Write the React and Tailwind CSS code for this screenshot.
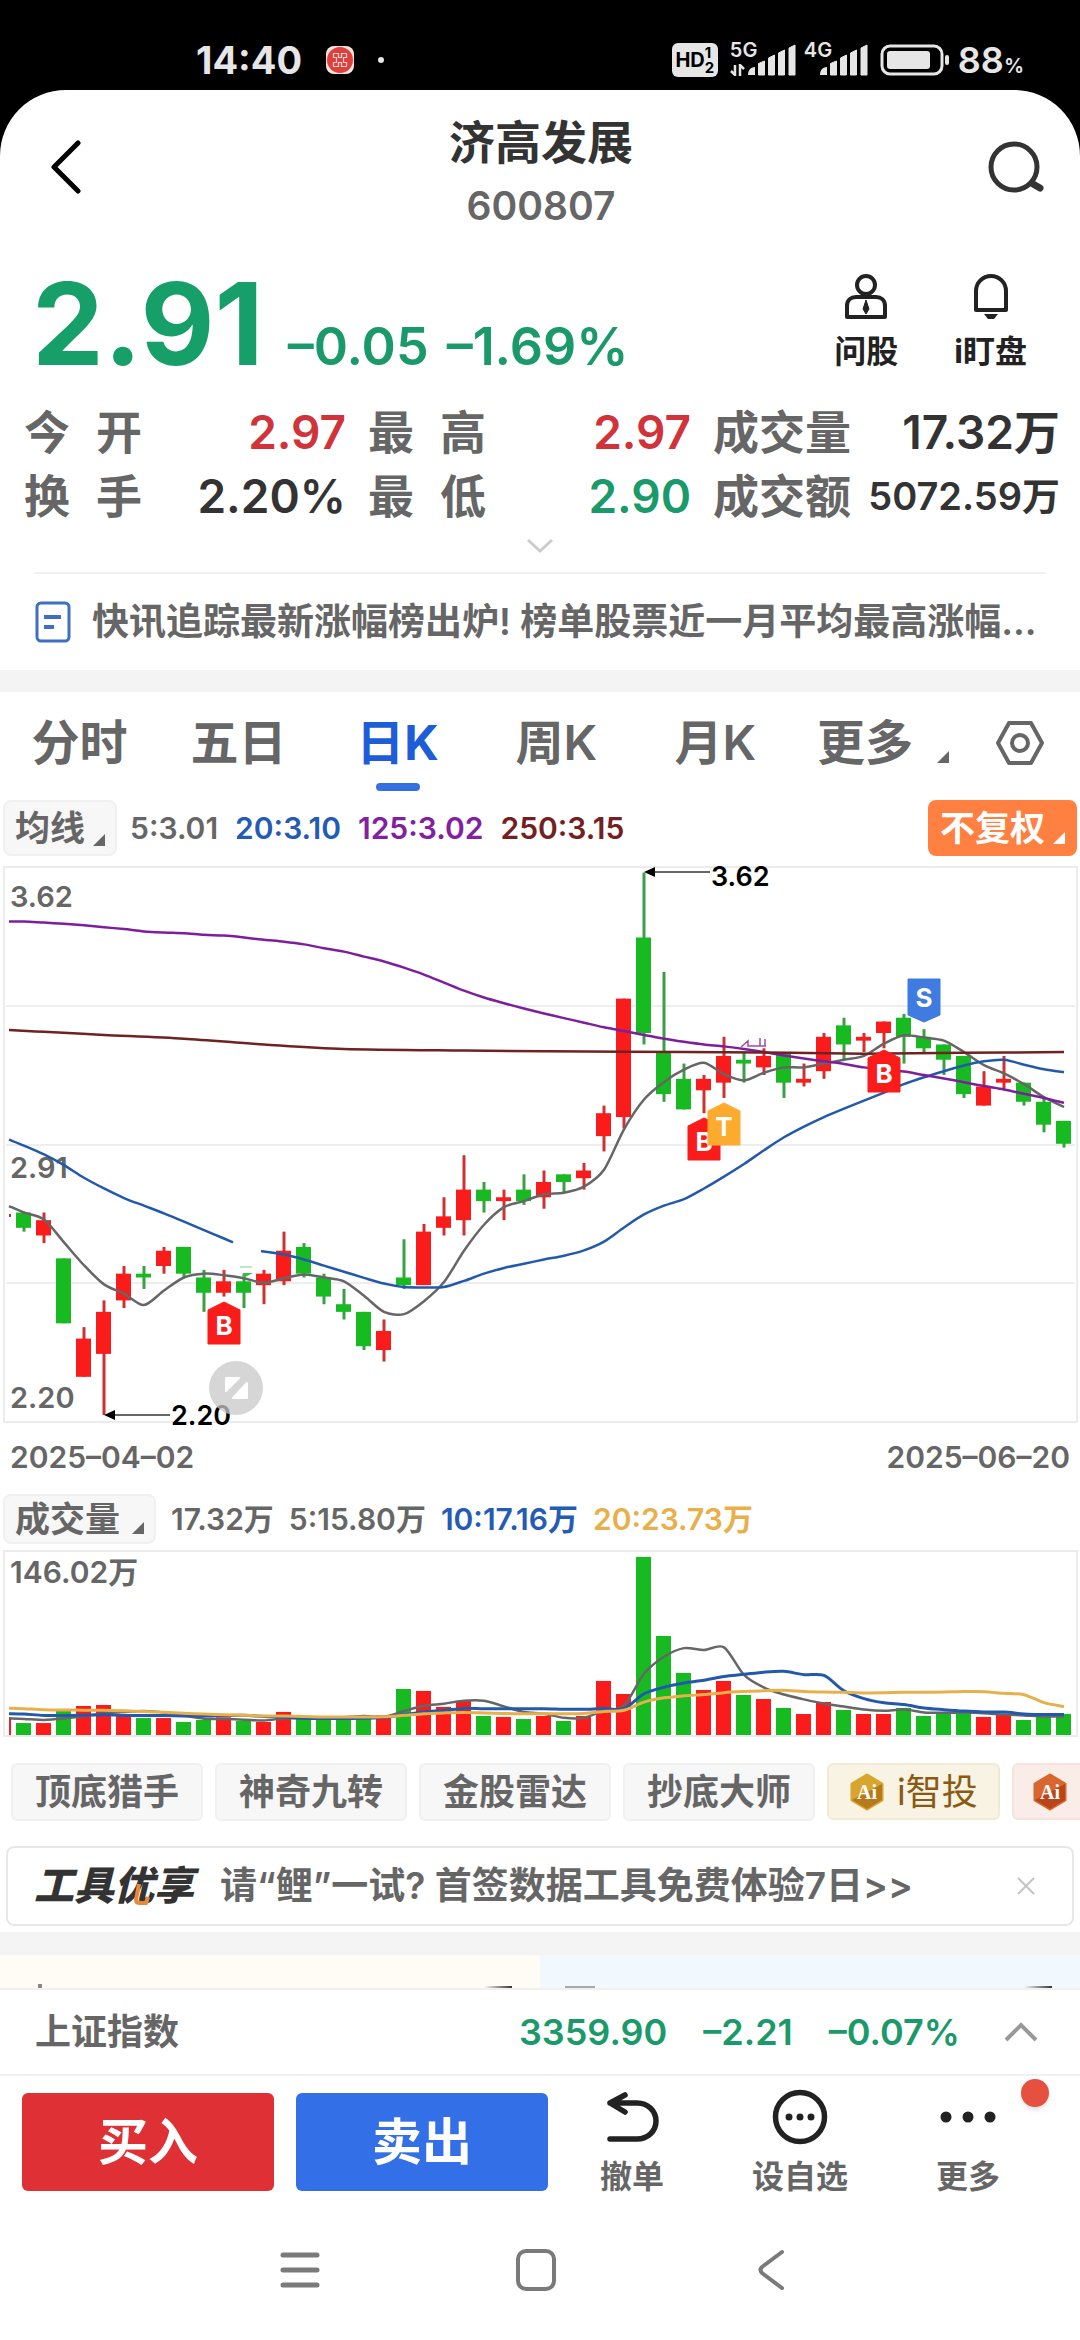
import React from 'react';

const candles = [
  // open, high, low, close (in cents), volume (in 万)
  [273, 273, 268, 269, 9.8],
  [267, 273, 265, 271, 9.8],
  [261, 261, 244, 244, 20],
  [230, 243, 230, 240, 23.8],
  [236, 250, 220, 247, 24.6],
  [250, 259, 248, 257, 16.1],
  [257, 259, 253, 256, 13.9],
  [259, 264, 257, 263, 13.9],
  [264, 264, 256, 257, 10.7],
  [256, 258, 247, 252, 12.3],
  [252, 258, 251, 255, 14.5],
  [255, 257, 248, 252, 11.5],
  [254, 258, 249, 257, 10.7],
  [255, 268, 254, 263, 18.9],
  [264, 265, 256, 257, 13.9],
  [256, 257, 249, 251, 14.5],
  [249, 253, 245, 247, 14.5],
  [247, 247, 237, 238, 15.6],
  [237, 245, 234, 242, 16.1],
  [256, 266, 253, 254, 37.7],
  [254, 270, 254, 268, 36.1],
  [269, 277, 267, 272, 23],
  [271, 288, 267, 279, 27.9],
  [279, 281, 273, 276, 15.6],
  [276, 279, 271, 277, 14.8],
  [279, 283, 275, 276, 13.1],
  [277, 284, 274, 281, 15.6],
  [283, 283, 278, 281, 11.5],
  [282, 286, 279, 284, 15.6],
  [293, 301, 289, 299, 44.3],
  [298, 329, 295, 329, 33.6],
  [345, 362, 317, 320, 146],
  [315, 336, 302, 304, 81.2],
  [308, 312, 300, 300, 50.9],
  [305, 309, 299, 308, 36.9],
  [307, 319, 303, 314, 44.3],
  [313, 315, 307, 312, 32.8],
  [311, 316, 309, 314, 29.5],
  [315, 315, 303, 307, 22.2],
  [307, 312, 306, 308, 17.2],
  [310, 320, 308, 319, 27.1],
  [322, 324, 313, 317, 20.5],
  [318, 320, 315, 319, 17.2],
  [320, 323, 316, 323, 17.2],
  [324, 325, 312, 319, 22.2],
  [319, 321, 315, 316, 15.6],
  [317, 317, 309, 313, 18.9],
  [314, 314, 303, 304, 18],
  [301, 310, 301, 306, 14.8],
  [307, 314, 305, 308, 16.4],
  [307, 307, 301, 302, 12.3],
  [302, 303, 294, 296, 14.8],
  [297, 297, 290, 291, 17.3],
];

const ma20 = [
  292.1, 290.5, 288.2, 285.4, 282.1, 279.3, 276.8, 274.8, 272.8, 270.6, 268.4, 266.2, 264.2, 262.8, 262, 260.7, 259.1,
  257.5, 255.9, 254.4, 253.5, 253.4, 253.5, 255.1, 257, 258.5, 259.6, 260.7, 261.7, 263.1, 265.4, 269.1, 272.5, 274.8,
  276.5, 279.3, 282.4, 285.7, 289.3, 292.7, 295.5, 298, 300.2, 302.3, 304.4, 306.6, 308.4, 310, 311.5, 312.6, 313,
  311.7, 310.5, 309.7,
];

const ma125 = [
  349.2, 349.2, 348.9, 348.6, 348.2, 347.7, 347.2, 346.6, 346.3, 346.1, 345.7, 345.5, 345, 344.4, 343.9, 343.2, 342.2,
  341.3, 340, 338.7, 337.1, 335.3, 333.2, 331.1, 329.3, 327.8, 326.4, 325.1, 323.9, 322.7, 321.5, 320.5, 319.5, 318.5,
  317.7, 317, 316.5, 315.8, 315, 314.1, 313.3, 312.6, 311.9, 311, 310.5, 309.9, 309, 308.1, 307.1, 306.1, 305.2, 304.1,
  303, 301.7,
];

const ma250 = [
  [-1, 320.8], [1, 320.3], [4, 319.5], [8, 318.5], [12, 317], [16, 315.8], [22, 315.4], [30, 315.1], [37, 314.9],
  [42, 314.6], [47, 314.8], [52, 315],
];

const prevCloses = [280, 274, 270, 272];
const prevVolumes = [26, 26, 26, 26, 26, 26, 26, 26, 26, 26, 21, 21, 21, 21, 22, 14, 14, 14, 14];

const RED = '#fa1b1b';
const GREEN = '#18ba22';

// first point of each line is cut by the left border
const xAt = (i) => (i < 0 ? 9 : 24 + i * 20);
const priceY = (p) => 549 - (p - 220) * 3.82;
const volumeY = (v) => 185 - v * 1.22;

const average = (values, before, n) => {
  const all = [...before, ...values];
  return values.map((_, i) => {
    const end = before.length + i + 1;
    return all.slice(end - n, end).reduce((a, b) => a + b, 0) / n;
  });
};

const smooth = (pts) => {
  let d = `M${pts[0][0]} ${pts[0][1]}`;
  for (let i = 0; i < pts.length - 1; i++) {
    const p0 = pts[i - 1] || pts[i];
    const p1 = pts[i];
    const p2 = pts[i + 1];
    const p3 = pts[i + 2] || p2;
    d += `C${p1[0] + (p2[0] - p0[0]) / 7} ${p1[1] + (p2[1] - p0[1]) / 7} ${p2[0] - (p3[0] - p1[0]) / 7} ${p2[1] - (p3[1] - p1[1]) / 7} ${p2[0]} ${p2[1]}`;
  }
  return d;
};

const Line = ({ points, color, width = 2.5 }) => (
  <path d={smooth(points)} fill="none" stroke={color} strokeWidth={width} strokeLinejoin="round" />
);

const Marker = ({ x, y, letter, color, down }) => (
  <g>
    <path
      d={
        down
          ? `M${x - 16} ${y - 43}h32v36L${x} ${y}L${x - 16} ${y - 7}z`
          : `M${x} ${y}L${x + 16} ${y + 8}v34h-32v-34z`
      }
      fill={color}
      stroke={color}
      strokeWidth="1"
      strokeLinejoin="round"
    />
    <text x={x} y={down ? y - 15 : y + 33} textAnchor="middle" fontSize="26" fontWeight="700" fill="#fff">
      {letter}
    </text>
  </g>
);

const PriceChart = () => {
  const closes = candles.map((c) => c[3]);
  const ma5 = average(closes, prevCloses, 5);
  const line20 = ma20.map((p, i) => [xAt(i - 1), priceY(p)]);
  return (
    <svg viewBox="0 0 1080 560" className="block w-full" role="img" aria-label="日K">
      <rect x="4" y="1" width="1073" height="555" fill="#fff" stroke="#ececec" strokeWidth="2" />
      <path d="M6 140H1075M6 279H1075M6 417H1075" stroke="#e9e9e9" strokeWidth="1.5" />
      <g fontSize="29" fontWeight="600" fill="#666">
        <text x="10" y="41">3.62</text>
        <text x="10" y="312">2.91</text>
        <text x="10" y="542">2.20</text>
      </g>
      <rect x="9" y="348" width="2" height="3" fill="#b33" />
      {candles.map(([open, high, low, close], i) => {
        const up = close > open;
        const top = priceY(Math.max(open, close));
        return (
          <g key={i}>
            <path d={`M${xAt(i)} ${priceY(high)}V${priceY(low)}`} stroke={up ? '#cf3030' : '#3a9f45'} strokeWidth="3" />
            <rect
              x={xAt(i) - 8}
              y={top}
              width="15"
              height={Math.max(3, priceY(Math.min(open, close)) - top)}
              fill={up ? RED : GREEN}
            />
          </g>
        );
      })}
      <Line color="#666" points={[[9, priceY(274.7)], ...ma5.map((p, i) => [xAt(i), priceY(p)])]} />
      <Line color="#2359ad" points={[...line20.slice(0, 12), [233, priceY(265.2)]]} />
      <Line color="#2359ad" points={[[261, priceY(262.9)], ...line20.slice(13)]} />
      <Line color="#7d1f9c" points={ma125.map((p, i) => [xAt(i - 1), priceY(p)])} />
      <Line color="#6f2222" points={ma250.map(([i, p]) => [xAt(i), priceY(p)])} />
      <path d="M741 181l7-6v5h18m-6-8v8m5-7v7" fill="none" stroke="#9b4fb0" strokeWidth="1.5" />
      <path d="M240 401h12" fill="none" stroke="#a9dfae" strokeWidth="1.5" />
      <path d="M243 407h10l-10 5z" fill="#3aba48" />

      <Marker x={224} y={436} letter="B" color={RED} />
      <Marker x={704} y={252} letter="B" color={RED} />
      <Marker x={724} y={237} letter="T" color="#fdab2e" />
      <Marker x={884} y={184} letter="B" color={RED} />
      <Marker x={924} y={156} letter="S" color="#3f7be0" down />

      <path d="M655 6H710M114 549H170" stroke="#666" strokeWidth="2" />
      <path d="M644 6l11-5v10zM104 549l11-5v10z" fill="#000" />
      <g fontSize="27" fontWeight="600" fill="#000">
        <text x="711" y="20">3.62</text>
        <text x="171" y="559">2.20</text>
      </g>
      <circle cx="236" cy="522" r="27" fill="#c8c8c8" fillOpacity="0.75" />
      <path d="M226 512h13l-13 13zM247 517v15h-14z" fill="#fff" stroke="#fff" strokeWidth="2" strokeLinejoin="round" />
    </svg>
  );
};

const VolumeChart = () => {
  const volumes = candles.map((c) => c[4]);
  const line = (n, first) => [
    [9, volumeY(first)],
    ...average(volumes, prevVolumes, n).map((v, i) => [xAt(i), volumeY(v)]),
  ];
  return (
    <svg viewBox="0 0 1080 187" className="block w-full" role="img" aria-label="成交量">
      <rect x="4" y="1" width="1073" height="185" fill="#fff" stroke="#ececec" strokeWidth="2" />
      <text x="10" y="33" fontSize="30" fontWeight="600" fill="#666">146.02万</text>
      <path d="M10 167V185" stroke={RED} strokeWidth="2" />
      {candles.map(([open, , , close, v], i) => (
        <rect key={i} x={xAt(i) - 8} y={volumeY(v)} width="15" height={v * 1.22} fill={close > open ? RED : GREEN} />
      ))}
      <Line color="#666" points={line(5, 13.5)} />
      <Line color="#2359ad" points={line(10, 17.5)} width={3} />
      <Line color="#e8b04a" points={line(20, 22)} width={3} />
    </svg>
  );
};

const Signal = () => (
  <svg width="48" height="32" viewBox="0 0 48 32" fill="#e6e6e6">
    <path d="M0 31c0-4 2-8 7-8v8z" />
    <path d="M10.500 31V19.500l6-2.500v14zM20.500 31V14l6-3v20zM30.500 31V9l6-3v25zM41 31V4l6-3v30z" stroke="#e6e6e6" strokeWidth="1" strokeLinejoin="round" />
  </svg>
);

const StatusBar = () => (
  <div className="flex h-[90px] items-start justify-between bg-black pl-[196px] pr-14 pt-9 text-[#e6e6e6]">
    <div className="flex h-12 items-center gap-6">
      <span className="text-[38px] font-bold leading-none">14:40</span>
      <svg width="28" height="28" viewBox="0 0 28 28">
        <rect width="28" height="28" rx="8" fill="#f3e4e2" />
        <circle cx="14" cy="14" r="13" fill="#e03f3c" />
        <path
          d="M7.500 7.500h5v4h3v-4h5v4h-3v5h3v4h-5v-4h-3v4h-5v-4h3v-5h-3z"
          fill="none"
          stroke="#fbd5d2"
          strokeWidth="1.2"
        />
      </svg>
      <span className="size-[6px] rounded-full bg-[#e6e6e6]" />
    </div>
    <div className="flex h-12 items-center gap-2">
      <span className="flex h-[34px] w-[46px] items-center justify-center rounded-md bg-[#e6e6e6] text-[20px] font-bold leading-none text-black">
        HD
        <span className="flex flex-col text-[15px] leading-none">
          <span>1</span>
          <span>2</span>
        </span>
      </span>
      <span className="relative ml-1 flex pl-[18px]">
        <span className="absolute -top-1 left-0 text-[20px] font-semibold leading-none">5G</span>
        <svg className="absolute bottom-0 left-0" width="16" height="12" viewBox="0 0 16 12">
          <path d="M5 1v10L1 7M10 12V1l4 4" fill="none" stroke="#e6e6e6" strokeWidth="2.5" />
        </svg>
        <Signal />
      </span>
      <span className="relative flex pl-[16px]">
        <span className="absolute -top-1 left-0 text-[20px] font-semibold leading-none">4G</span>
        <Signal />
      </span>
      <svg className="ml-1" width="70" height="32" viewBox="0 0 70 32">
        <rect x="2" y="2" width="60" height="28" rx="8" fill="none" stroke="#e6e6e6" strokeWidth="3" />
        <rect x="7" y="7" width="43" height="18" rx="3" fill="#e6e6e6" />
        <rect x="65" y="11" width="4" height="10" rx="2" fill="#e6e6e6" />
      </svg>
      <span className="text-[36px] font-semibold leading-none">
        88<span className="text-[20px]">%</span>
      </span>
    </div>
  </div>
);

const Corner = () => (
  <svg width="12" height="12" viewBox="0 0 12 12" fill="currentColor">
    <path d="M12 0v12H0z" />
  </svg>
);

const stats = [
  [['今开', '2.97', 'text-[#d0343a]'], ['最高', '2.97', 'text-[#d0343a]'], ['成交量', '17.32万', 'text-[#333]']],
  [['换手', '2.20%', 'text-[#333]'], ['最低', '2.90', 'text-[#1a9a6a]'], ['成交额', '5072.59万', 'text-[#333]']],
];

const tabs = ['分时', '五日', '日K', '周K', '月K'];
const tools = ['顶底猎手', '神奇九转', '金股雷达', '抄底大师'];

const AiBadge = ({ from, to }) => (
  <svg width="36" height="40" viewBox="0 0 36 40">
    <path d="M18 3l15 9v16l-15 9-15-9V12z" fill={from} stroke={from} strokeWidth="3" strokeLinejoin="round" />
    <path d="M18 37l15-9V12L3 28z" fill={to} />
    <text x="18" y="27" textAnchor="middle" fontSize="20" fontWeight="700" fill="#fff" fontFamily="Liberation Serif, serif">
      Ai
    </text>
  </svg>
);

const App = () => {
  return (
    <div className="min-h-[2340px] overflow-hidden bg-black font-[Inter,'Noto_Sans_CJK_SC',sans-serif] text-[#666]">
      <StatusBar />

      <div className="min-h-[2250px] rounded-t-[66px] bg-white">
        <header className="flex h-[154px] items-center justify-between pl-[38px] pr-9">
          <button aria-label="返回" className="flex w-16 pl-3">
            <svg width="32" height="54" viewBox="0 0 32 54" fill="none">
              <path d="M28 3L4 27l24 24" stroke="#000" strokeWidth="5" strokeLinecap="round" strokeLinejoin="round" />
            </svg>
          </button>
          <div className="pt-[14px] text-center">
            <h1 className="text-[46px] font-bold leading-[64px] text-[#333]">济高发展</h1>
            <p className="text-[39px] font-semibold leading-[64px]">600807</p>
          </div>
          <button aria-label="搜索" className="flex w-16 justify-end">
            <svg width="56" height="52" viewBox="0 0 56 52" fill="none" stroke="#333" strokeWidth="5">
              <circle cx="26" cy="26" r="23" />
              <path d="M45 43l7 4" strokeWidth="7" strokeLinecap="round" />
            </svg>
          </button>
        </header>

        <section className="flex items-end justify-between pl-8 pr-[53px] pt-6">
          <div className="flex items-baseline gap-6">
            <span className="text-[114px] font-bold leading-[112px] text-[#169f68]">2.91</span>
            <span className="flex gap-[18px] text-[52px] font-semibold leading-none text-[#1a9a6a]">
              <span>–0.05</span>
              <span>–1.69%</span>
            </span>
          </div>
          <div className="flex gap-14 pb-2 text-[32px] font-bold leading-10 text-[#222]">
            <button className="flex flex-col items-center gap-3">
              <svg width="44" height="46" viewBox="0 0 44 46" fill="none" stroke="#222" strokeWidth="4">
                <circle cx="22" cy="11" r="9" />
                <path d="M3 43V32c0-6 4-9 9-9h20c5 0 9 3 9 9v11z" strokeLinejoin="round" />
                <path d="M22 26l3 9-3 5-3-5z" fill="#222" strokeWidth="1" />
              </svg>
              问股
            </button>
            <button className="flex flex-col items-center gap-3">
              <svg width="44" height="46" viewBox="0 0 44 46" fill="none" stroke="#222" strokeWidth="4">
                <path d="M7 36V17a15 15 0 0130 0v19z" strokeLinejoin="round" />
                <path d="M15 40h14l-4 5h-6z" fill="#222" stroke="none" />
              </svg>
              i盯盘
            </button>
          </div>
        </section>

        <section className="pl-6 pr-5 pt-5">
          {stats.map((row, i) => (
            <dl key={i} className="grid grid-cols-[322fr_323fr_347fr] gap-x-[22px] text-[46px] font-semibold leading-[64px]">
              {row.map(([label, value, color]) => (
                <div key={label} className="flex items-center justify-between whitespace-nowrap">
                  <dt className={label.length === 2 ? 'flex w-[118px] justify-between' : ''}>
                    {label.length === 2 ? label.split('').map((ch) => <span key={ch}>{ch}</span>) : label}
                  </dt>
                  <dd className={value.length > 7 ? `text-[38px] ${color}` : color}>{value}</dd>
                </div>
              ))}
            </dl>
          ))}
        </section>
        <button aria-label="展开" className="mx-auto flex h-9 w-20 items-center justify-center">
          <svg width="28" height="16" viewBox="0 0 28 16" fill="none" stroke="#ccc" strokeWidth="3">
            <path d="M2 2l12 11L26 2" />
          </svg>
        </button>

        <a href="#news" className="mx-[34px] mt-2 flex h-[98px] items-center gap-5 border-t-2 border-[#f0f0f0]">
          <svg className="shrink-0" width="38" height="42" viewBox="0 0 38 42" fill="none" stroke="#3f6fc4" strokeWidth="3">
            <rect x="3" y="2" width="32" height="38" rx="4" />
            <path d="M10 16h17M10 26h10" strokeWidth="4" />
          </svg>
          <span className="whitespace-nowrap text-[37px] font-semibold">
            快讯追踪最新涨幅榜出炉! 榜单股票近一月平均最高涨幅...
          </span>
        </a>
        <div className="h-[22px] bg-[#f4f4f4]" />

        <nav className="mb-[6px] grid h-[102px] grid-cols-[159fr_159fr_159fr_159fr_159fr_285fr] items-center text-[48px] font-semibold">
          {tabs.map((tab) => (
            <button key={tab} className={tab === '日K' ? 'relative font-bold text-[#1e5dd8]' : ''}>
              {tab}
              {tab === '日K' && (
                <span className="absolute -bottom-3 left-1/2 h-2 w-11 -translate-x-1/2 rounded-full bg-[#3670e0]" />
              )}
            </button>
          ))}
          <div className="flex items-center justify-between pl-[22px] pr-9">
            <button className="flex items-end gap-6">
              更多
              <span className="flex pb-4"><Corner /></span>
            </button>
            <button aria-label="设置">
              <svg width="48" height="46" viewBox="0 0 48 46" fill="none" stroke="#666" strokeWidth="4">
                <path d="M13 3h22l11 20-11 20H13L2 23z" strokeLinejoin="round" />
                <circle cx="24" cy="23" r="8" />
              </svg>
            </button>
          </div>
        </nav>

        <div className="flex items-center justify-between px-[3px]">
          <div className="flex items-center gap-[17px] text-[30px] font-semibold">
            <button className="flex h-[56px] items-end gap-2 rounded-lg border-2 border-[#f0f0f0] bg-[#f7f7f7] px-[10px] text-[35px] leading-[52px]">
              均线
              <span className="flex pb-2"><Corner /></span>
            </button>
            <span className="-ml-1">5:3.01</span>
            <span className="text-[#235bb5]">20:3.10</span>
            <span className="text-[#82209f]">125:3.02</span>
            <span className="text-[#742020]">250:3.15</span>
          </div>
          <button className="flex h-[56px] items-end gap-2 rounded-lg bg-[#ff8040] px-3 text-[35px] font-bold leading-[56px] text-white">
            不复权
            <span className="flex pb-3"><Corner /></span>
          </button>
        </div>

        <div className="pt-[10px]">
          <PriceChart />
        </div>
        <div className="flex justify-between px-[10px] pt-2 text-[30px] font-semibold leading-[46px]">
          <span>2025–04–02</span>
          <span>2025–06–20</span>
        </div>

        <div className="flex items-center gap-[15px] px-[3px] pb-[6px] pt-[14px] text-[30px] font-semibold">
          <button className="flex h-[50px] items-end gap-3 rounded-lg border-2 border-[#f0f0f0] bg-[#f7f7f7] px-[10px] text-[35px] leading-[46px]">
            成交量
            <span className="flex pb-2"><Corner /></span>
          </button>
          <span>17.32万</span>
          <span>5:15.80万</span>
          <span className="text-[#235bb5]">10:17.16万</span>
          <span className="text-[#e8b04a]">20:23.73万</span>
        </div>
        <VolumeChart />

        <div className="flex gap-3 overflow-hidden pb-[25px] pl-[11px] pt-[26px] text-[36px] font-semibold">
          {tools.map((tool) => (
            <button key={tool} className="h-[58px] shrink-0 rounded-md border-2 border-[#f0f0f0] bg-[#f7f7f7] px-[22px] leading-[54px]">
              {tool}
            </button>
          ))}
          <button className="flex h-[57px] shrink-0 items-center gap-3 rounded-md border-2 border-[#f0ead6] bg-[#f8f3e2] px-5 font-normal text-[#8a5a14]">
            <AiBadge from="#d9a52e" to="#b57a1a" />
            i智投
          </button>
          <button aria-label="Ai" className="flex h-[57px] w-40 shrink-0 items-center rounded-md border-2 border-[#f5e4de] bg-[#faece7] px-[18px]">
            <AiBadge from="#d9662e" to="#b8461a" />
          </button>
        </div>

        <div className="mx-[6px] flex h-20 items-center rounded-lg border-2 border-[#e8e8e8] pl-[26px] pr-9">
          <span className="relative text-[40px] font-black italic leading-none text-[#333]">
            工具优享
            <svg className="absolute bottom-0 left-[100px]" width="18" height="22" viewBox="0 0 18 22" fill="none">
              <path d="M5 0L2 16q0 3 4 3h6l2-6" stroke="#e8893a" strokeWidth="4" />
            </svg>
          </span>
          <a href="#tools" className="ml-[26px] text-[37px] font-semibold">请“鲤”一试? 首签数据工具免费体验7日&gt;&gt;</a>
          <button aria-label="关闭" className="ml-auto">
            <svg width="20" height="20" viewBox="0 0 20 20" stroke="#c4c4c4" strokeWidth="2">
              <path d="M2 2l16 16M18 2L2 18" />
            </svg>
          </button>
        </div>

        <div className="mt-[6px] h-[23px] bg-[#f4f4f4]" />
        <div className="grid h-[33px] grid-cols-2">
          <div className="flex items-end justify-between bg-[#fffcf5] pl-[38px] pr-7">
            <span className="h-1 w-1 bg-[#888]" />
            <span className="h-[2px] w-7 bg-linear-to-r from-transparent to-[#333]" />
          </div>
          <div className="flex items-end justify-between bg-[#f2f9fe] pl-[25px] pr-7">
            <span className="h-[2px] w-[30px] bg-[#aaa]" />
            <span className="h-[2px] w-7 bg-linear-to-r from-transparent to-[#333]" />
          </div>
        </div>

        <div className="flex h-[88px] items-center border-y-2 border-[#f0f0f0] pl-[35px] pr-[42px] text-[36px] font-semibold text-[#1a9a6a]">
          <span className="mr-auto text-[#666]">上证指数</span>
          <span>3359.90</span>
          <span className="ml-9">–2.21</span>
          <span className="ml-9">–0.07%</span>
          <button aria-label="展开指数" className="ml-11">
            <svg width="34" height="20" viewBox="0 0 34 20" fill="none" stroke="#999" strokeWidth="4">
              <path d="M2 18L17 3l15 15" />
            </svg>
          </button>
        </div>

        <div className="flex items-start pl-[22px] pr-7 pt-[17px]">
          <button className="mr-[22px] h-[98px] w-[252px] rounded-md bg-[#df3035] text-[50px] font-bold text-white">
            买入
          </button>
          <button className="h-[98px] w-[252px] rounded-md bg-[#336fe6] text-[50px] font-bold text-white">卖出</button>
          <div className="-mt-1 grid grow grid-cols-3 text-[32px] font-bold leading-10">
            <button className="flex flex-col items-center gap-3">
              <svg width="56" height="56" viewBox="0 0 56 56" fill="none" stroke="#222" strokeWidth="5.500">
                <path
                  d="M21 6L6 14l15 9M6 14h27c11 0 19 8 19 18s-8 18-19 18H6"
                  strokeLinecap="round"
                  strokeLinejoin="round"
                />
              </svg>
              撤单
            </button>
            <button className="flex flex-col items-center gap-3">
              <svg width="56" height="56" viewBox="0 0 56 56" fill="#222">
                <circle cx="28" cy="28" r="24.500" fill="none" stroke="#222" strokeWidth="5.500" />
                <circle cx="17" cy="28" r="3.500" />
                <circle cx="28" cy="28" r="3.500" />
                <circle cx="39" cy="28" r="3.500" />
              </svg>
              设自选
            </button>
            <button className="relative flex flex-col items-center gap-3">
              <svg width="56" height="56" viewBox="0 0 56 56" fill="#222">
                <circle cx="6" cy="28" r="5.500" />
                <circle cx="28" cy="28" r="5.500" />
                <circle cx="50" cy="28" r="5.500" />
              </svg>
              更多
              <span className="absolute -top-2.5 right-[3px] size-7 rounded-full bg-[#e5503f] shadow-md" />
            </button>
          </div>
        </div>

        <div className="flex justify-center gap-[196px] pr-2 pt-[52px]">
          <button aria-label="最近任务">
            <svg width="40" height="40" viewBox="0 0 40 40" stroke="#7a7a7a" strokeWidth="5" strokeLinecap="round">
              <path d="M3 5h34M3 20h34M3 35h34" />
            </svg>
          </button>
          <button aria-label="主屏幕">
            <svg width="40" height="42" viewBox="0 0 40 42" fill="none" stroke="#7a7a7a" strokeWidth="4">
              <rect x="2" y="2" width="36" height="38" rx="8" />
            </svg>
          </button>
          <button aria-label="后退">
            <svg width="40" height="42" viewBox="0 0 40 42" fill="none" stroke="#7a7a7a" strokeWidth="4" strokeLinecap="round">
              <path d="M30 3L10 18q-3 3 0 6l20 15" strokeLinejoin="round" />
            </svg>
          </button>
        </div>
      </div>
    </div>
  );
};

export default App;
